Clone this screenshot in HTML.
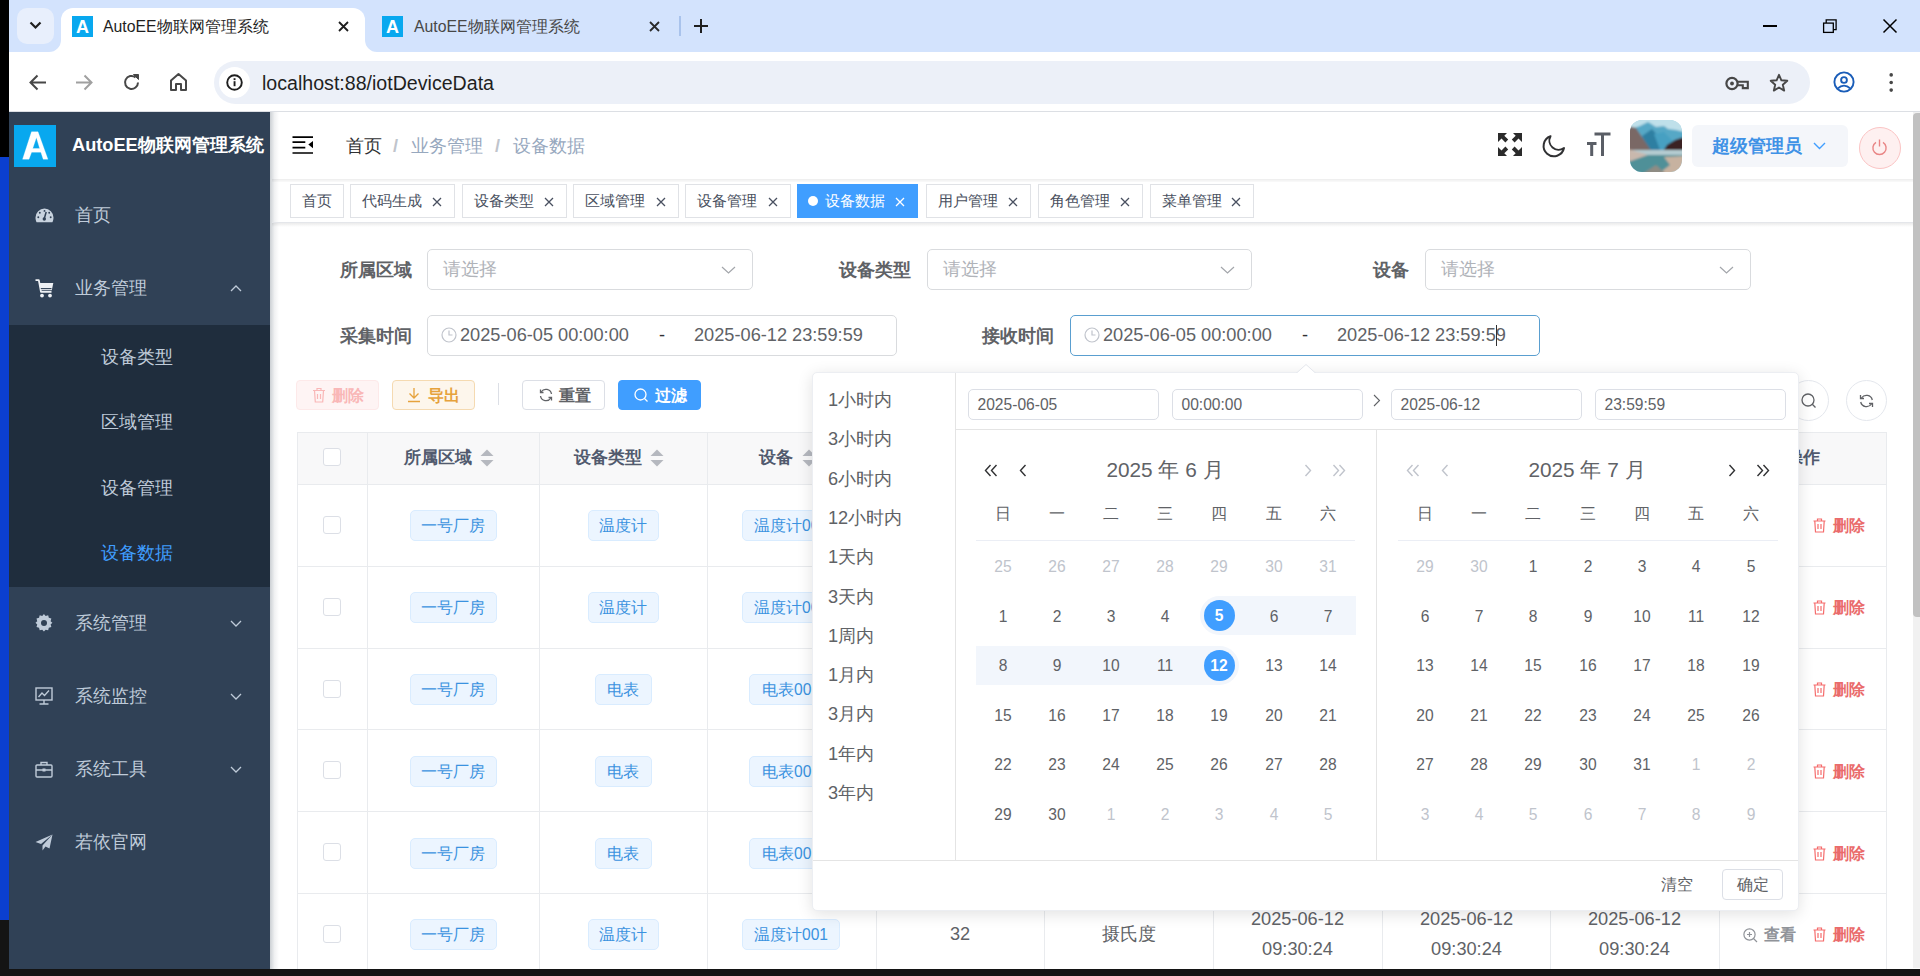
<!DOCTYPE html><html><head><meta charset="utf-8"><title>AutoEE</title><style>
*{box-sizing:border-box;margin:0;padding:0}
html,body{width:1920px;height:976px;overflow:hidden;background:#fff;font-family:"Liberation Sans",sans-serif}
body{position:relative}
.a{position:absolute}
svg{display:block;overflow:visible}
.nw{white-space:nowrap}
.tabtitle{font-size:15.8px;color:#1f1f1f;white-space:nowrap;line-height:20px}
.fav{width:21px;height:21px;background:#08a8ef;color:#fff;font-size:18px;font-weight:bold;line-height:22px;text-align:center}
.mi{color:#bfcbd9;font-size:18.2px;white-space:nowrap;line-height:22px}
.tag{height:34px;border:1px solid #d8dce5;background:#fff;color:#495060;font-size:15.6px;line-height:32px;padding:0 10px;white-space:nowrap}
.lbl{font-size:18.2px;font-weight:bold;color:#606266;white-space:nowrap;line-height:22px;text-align:right}
.inp{height:41px;border:1px solid #d9dbde;border-radius:5px;background:#fff}
.ph{color:#b0b3b9;font-size:18.2px;line-height:22px;white-space:nowrap}
.dt{color:#606266;font-size:18.2px;line-height:22px;white-space:nowrap}
.btn{height:30px;border-radius:4px;font-size:15.6px;line-height:28px;white-space:nowrap;border:1px solid}
.th{font-size:17px;font-weight:bold;color:#515a6e;white-space:nowrap;line-height:22px}
.td{font-size:18.2px;color:#606266;white-space:nowrap;line-height:30px;text-align:center}
.etag{height:31px;border:1px solid #d9ecff;background:#ecf5ff;color:#3a92e0;font-size:15.6px;line-height:29px;border-radius:5px;padding:0 12px;white-space:nowrap}
.vl{width:1px;background:#e9ebee}
.hl{height:1px;background:#e9ebee}
.sc{font-size:18.2px;color:#606266;white-space:nowrap;line-height:22px}
.pin{height:31px;border:1px solid #dcdfe6;border-radius:5px;background:#fff;font-size:15.6px;color:#606266;line-height:29px;padding:0 8.5px;white-space:nowrap}
.cday{width:54px;text-align:center;font-size:15.6px;color:#606266;line-height:20px;white-space:nowrap}
.cday.o{color:#c0c4cc}
.wk{width:54px;text-align:center;font-size:15.6px;color:#606266;line-height:20px}
</style></head><body>
<div class="a" style="left:0;top:0;width:9px;height:157px;background:#000"></div>
<div class="a" style="left:0;top:157px;width:9px;height:763px;background:#0b3fd0"></div>
<div class="a" style="left:0;top:920px;width:9px;height:56px;background:#141414"></div>
<div class="a" style="left:9px;top:0;width:1911px;height:52px;background:#d3e3fd"></div>
<div class="a" style="left:17px;top:8px;width:37px;height:36px;border-radius:10px;background:#e8effc"></div>
<svg class="a" style="left:29px;top:21px" width="13" height="9" viewBox="0 0 13 9"><path d="M1.5 1.5 L6.5 6.5 L11.5 1.5" stroke="#1f1f1f" stroke-width="2.2" fill="none"/></svg>
<div class="a" style="left:61px;top:8px;width:304px;height:44px;background:#fff;border-radius:12px 12px 0 0"></div>
<svg class="a" style="left:49px;top:40px" width="12" height="12" viewBox="0 0 12 12"><path d="M0 12 A12 12 0 0 0 12 0 V12Z" fill="#fff"/></svg>
<svg class="a" style="left:365px;top:40px" width="12" height="12" viewBox="0 0 12 12"><path d="M12 12 A12 12 0 0 1 0 0 V12Z" fill="#fff"/></svg>
<div class="a fav" style="left:72px;top:16px">A</div>
<div class="a tabtitle" style="left:103px;top:17px">AutoEE物联网管理系统</div>
<svg class="a" style="left:338px;top:21px" width="11" height="11" viewBox="0 0 11 11"><path d="M1 1L10 10M10 1L1 10" stroke="#1f1f1f" stroke-width="1.8"/></svg>
<div class="a fav" style="left:382px;top:16px">A</div>
<div class="a tabtitle" style="left:414px;top:17px;color:#474747">AutoEE物联网管理系统</div>
<svg class="a" style="left:649px;top:21px" width="11" height="11" viewBox="0 0 11 11"><path d="M1 1L10 10M10 1L1 10" stroke="#2a2a2a" stroke-width="1.8"/></svg>
<div class="a" style="left:679px;top:16px;width:1.5px;height:20px;background:#a9c3ec"></div>
<svg class="a" style="left:693px;top:18px" width="16" height="16" viewBox="0 0 16 16"><path d="M8 1V15M1 8H15" stroke="#1f1f1f" stroke-width="2"/></svg>
<div class="a" style="left:1763px;top:25px;width:14px;height:1.5px;background:#000"></div>
<svg class="a" style="left:1822px;top:18px" width="16" height="16" viewBox="0 0 16 16"><rect x="1.6" y="5.1" width="9.7" height="9.3" fill="none" stroke="#000" stroke-width="1.3"/><path d="M4.2 5V1.9H14.1V11.6H11.4" fill="none" stroke="#000" stroke-width="1.3"/></svg>
<svg class="a" style="left:1883px;top:19px" width="14" height="14" viewBox="0 0 14 14"><path d="M0.5 0.5L13.5 13.5M13.5 0.5L0.5 13.5" stroke="#000" stroke-width="1.5"/></svg>
<div class="a" style="left:9px;top:52px;width:1911px;height:60px;background:#fff;border-radius:10px 10px 0 0"></div>
<div class="a" style="left:9px;top:111px;width:1911px;height:1px;background:#dcdfe4"></div>
<svg class="a" style="left:29px;top:74px" width="18" height="17" viewBox="0 0 18 17"><path d="M17 8.5H2M8.5 1.5L1.5 8.5L8.5 15.5" stroke="#474747" stroke-width="2" fill="none"/></svg>
<svg class="a" style="left:75px;top:74px" width="18" height="17" viewBox="0 0 18 17"><path d="M1 8.5H16M9.5 1.5L16.5 8.5L9.5 15.5" stroke="#a0a0a0" stroke-width="2" fill="none"/></svg>
<svg class="a" style="left:122px;top:73px" width="19" height="19" viewBox="0 0 19 19"><path d="M16 9.5A6.5 6.5 0 1 1 13.6 4.4" stroke="#474747" stroke-width="2" fill="none"/><path d="M11.5 1.5H16.5V6.5Z" fill="#474747" stroke="#474747" stroke-width="1"/></svg>
<svg class="a" style="left:169px;top:72px" width="19" height="20" viewBox="0 0 19 20"><path d="M2 8.5L9.5 2L17 8.5V18H12V12H7V18H2Z" stroke="#474747" stroke-width="2" fill="none" stroke-linejoin="round"/></svg>
<div class="a" style="left:214px;top:61px;width:1596px;height:43px;border-radius:22px;background:#ecf0f8"></div>
<div class="a" style="left:219px;top:67px;width:31px;height:31px;border-radius:50%;background:#fff"></div>
<svg class="a" style="left:226px;top:74px" width="17" height="17" viewBox="0 0 17 17"><circle cx="8.5" cy="8.5" r="7.3" fill="none" stroke="#1f1f1f" stroke-width="1.9"/><rect x="7.6" y="7.2" width="1.9" height="5" fill="#1f1f1f"/><rect x="7.6" y="4.2" width="1.9" height="1.9" fill="#1f1f1f"/></svg>
<div class="a nw" style="left:262px;top:72px;font-size:19.6px;line-height:22px;color:#1f1f1f">localhost:88/iotDeviceData</div>
<svg class="a" style="left:1725px;top:76px" width="25" height="15" viewBox="0 0 25 15"><circle cx="7" cy="7.5" r="5.6" fill="none" stroke="#474747" stroke-width="2.2"/><circle cx="7" cy="7.5" r="1.9" fill="#474747"/><path d="M12.6 5.8H22.8V12.1H17.8V9.2H12.6" fill="none" stroke="#474747" stroke-width="2.1"/></svg>
<svg class="a" style="left:1769px;top:73px" width="20" height="20" viewBox="0 0 20 20"><path d="M10 1.8L12.4 7.3L18.3 7.8L13.8 11.7L15.2 17.6L10 14.5L4.8 17.6L6.2 11.7L1.7 7.8L7.6 7.3Z" fill="none" stroke="#474747" stroke-width="1.9" stroke-linejoin="round"/></svg>
<svg class="a" style="left:1833px;top:71px" width="22" height="22" viewBox="0 0 22 22"><circle cx="11" cy="11" r="9.6" fill="none" stroke="#1a5db8" stroke-width="1.9"/><circle cx="11" cy="9" r="2.9" fill="none" stroke="#1a5db8" stroke-width="1.9"/><path d="M4.9 17.4C6.9 15.3 9 14.6 11 14.6C13 14.6 15.1 15.3 17.1 17.4" fill="none" stroke="#1a5db8" stroke-width="1.9"/></svg>
<svg class="a" style="left:1888px;top:73px" width="6" height="19" viewBox="0 0 6 19"><circle cx="3.2" cy="1.9" r="1.8" fill="#474747"/><circle cx="3.2" cy="9.5" r="1.8" fill="#474747"/><circle cx="3.2" cy="17.1" r="1.8" fill="#474747"/></svg>
<div class="a" style="left:9px;top:112px;width:261px;height:864px;background:#304156"></div>
<div class="a" style="left:9px;top:325px;width:261px;height:262px;background:#1f2d3d"></div>
<div class="a" style="left:14px;top:125px;width:42px;height:42px;background:#08a8ef"></div>
<svg class="a" style="left:14px;top:125px" width="42" height="42" viewBox="0 0 42 42"><path d="M8.6 34.2L17.5 6.8H24L33.9 34.2H29.2L26.9 27.2H17.6L15 34.2ZM18.7 23.5H25.7L22.4 12.4Z" fill="#fff" fill-rule="evenodd" stroke="#fff" stroke-width="0.3" stroke-linejoin="round"/></svg>
<div class="a nw" style="left:72px;top:134px;font-size:18.2px;font-weight:bold;color:#fff;line-height:22px">AutoEE物联网管理系统</div>
<div class="a mi" style="left:75px;top:204px;color:#bfcbd9">首页</div>
<div class="a mi" style="left:75px;top:277px;color:#bfcbd9">业务管理</div>
<div class="a mi" style="left:101px;top:346px;color:#bfcbd9">设备类型</div>
<div class="a mi" style="left:101px;top:411px;color:#bfcbd9">区域管理</div>
<div class="a mi" style="left:101px;top:477px;color:#bfcbd9">设备管理</div>
<div class="a mi" style="left:101px;top:542px;color:#409eff">设备数据</div>
<div class="a mi" style="left:75px;top:612px;color:#bfcbd9">系统管理</div>
<div class="a mi" style="left:75px;top:685px;color:#bfcbd9">系统监控</div>
<div class="a mi" style="left:75px;top:758px;color:#bfcbd9">系统工具</div>
<div class="a mi" style="left:75px;top:831px;color:#bfcbd9">若依官网</div>
<svg class="a" style="left:230px;top:285px" width="12" height="7" viewBox="0 0 12 7"><path d="M1 6L6 1L11 6" stroke="#bfcbd9" stroke-width="1.3" fill="none"/></svg>
<svg class="a" style="left:230px;top:620px" width="12" height="7" viewBox="0 0 12 7"><path d="M1 1L6 6L11 1" stroke="#bfcbd9" stroke-width="1.3" fill="none"/></svg>
<svg class="a" style="left:230px;top:693px" width="12" height="7" viewBox="0 0 12 7"><path d="M1 1L6 6L11 1" stroke="#bfcbd9" stroke-width="1.3" fill="none"/></svg>
<svg class="a" style="left:230px;top:766px" width="12" height="7" viewBox="0 0 12 7"><path d="M1 1L6 6L11 1" stroke="#bfcbd9" stroke-width="1.3" fill="none"/></svg>
<svg class="a" style="left:35px;top:208px" width="19" height="15" viewBox="0 0 19 15"><path d="M9.5 0.5A9 9 0 0 0 0.5 9.5C0.5 11.3 0.9 13 1.6 14.3H17.4C18.1 13 18.5 11.3 18.5 9.5A9 9 0 0 0 9.5 0.5Z" fill="#c8d3df"/><path d="M9.3 10.5L11.2 4" stroke="#304156" stroke-width="1.5"/><circle cx="9.3" cy="11" r="1.7" fill="#304156"/><circle cx="3.3" cy="9.3" r="0.95" fill="#304156"/><circle cx="15.7" cy="9.3" r="0.95" fill="#304156"/><circle cx="4.8" cy="4.8" r="0.95" fill="#304156"/><circle cx="14.2" cy="4.8" r="0.95" fill="#304156"/><circle cx="9.5" cy="2.9" r="0.95" fill="#304156"/></svg>
<svg class="a" style="left:35px;top:279px" width="19" height="19" viewBox="0 0 19 19"><path d="M0.5 1.2H3.8L6 12.8H16.5" fill="none" stroke="#eef1f5" stroke-width="1.8" stroke-linejoin="round"/><path d="M4.4 4H18.3L16.8 11.2H5.6Z" fill="#eef1f5"/><path d="M5.8 9.6H16.5" stroke="#304156" stroke-width="1.1"/><circle cx="7" cy="16.6" r="1.9" fill="#eef1f5"/><circle cx="15" cy="16.6" r="1.9" fill="#eef1f5"/></svg>
<svg class="a" style="left:35px;top:614px" width="18" height="18" viewBox="0 0 18 18"><path d="M9 0.5L10.8 2.6L13.5 1.9L14.2 4.6L16.9 5.4L16.1 8.1L18 9.9L16.1 11.6L16.9 14.4L14.2 15.1L13.5 17.8L10.8 17.2L9 19.2L7.2 17.2L4.5 17.8L3.8 15.1L1.1 14.4L1.9 11.6L0 9.9L1.9 8.1L1.1 5.4L3.8 4.6L4.5 1.9L7.2 2.6Z" transform="scale(0.94) translate(0.5,-0.5)" fill="#bfcbd9"/><circle cx="9" cy="9" r="3" fill="#304156"/></svg>
<svg class="a" style="left:35px;top:687px" width="18" height="18" viewBox="0 0 18 18"><rect x="1" y="1" width="16" height="12" fill="none" stroke="#bfcbd9" stroke-width="1.4"/><path d="M3.5 10L7 6L9.5 8.5L14 3.5" fill="none" stroke="#bfcbd9" stroke-width="1.3"/><path d="M9 13V17M4.5 17H13.5" stroke="#bfcbd9" stroke-width="1.4"/></svg>
<svg class="a" style="left:35px;top:761px" width="18" height="17" viewBox="0 0 18 17"><rect x="1" y="4" width="16" height="12" rx="1" fill="none" stroke="#bfcbd9" stroke-width="1.4"/><path d="M6 4V1.5H12V4M1 9H17" stroke="#bfcbd9" stroke-width="1.4" fill="none"/><rect x="7.5" y="7.5" width="3" height="3" fill="#bfcbd9"/></svg>
<svg class="a" style="left:35px;top:834px" width="18" height="17" viewBox="0 0 18 17"><path d="M17.5 0.5L0.5 8L6 10L17.5 0.5L7.5 11.5V16.5L10.5 12.5L14.5 14.5Z" fill="#bfcbd9"/></svg>
<div class="a" style="left:270px;top:112px;width:9px;height:864px;background:linear-gradient(90deg,rgba(0,21,41,.2),rgba(0,21,41,.06) 50%,rgba(0,21,41,0))"></div>
<svg class="a" style="left:292px;top:136px" width="22" height="19" viewBox="0 0 22 19"><path d="M0.5 1.1H21M0.5 6.2H13.3M0.5 11.6H13.3M0.5 17H21" stroke="#000" stroke-width="1.7"/><path d="M21 5L21 12.2L16.3 8.6Z" fill="#000"/></svg>
<div class="a nw" style="left:346px;top:135px;font-size:18.2px;line-height:22px;color:#303133">首页</div>
<div class="a nw" style="left:393px;top:135px;font-size:18.2px;line-height:22px;color:#c0c4cc;font-weight:bold">/</div>
<div class="a nw" style="left:411px;top:135px;font-size:18.2px;line-height:22px;color:#97a8be">业务管理</div>
<div class="a nw" style="left:495px;top:135px;font-size:18.2px;line-height:22px;color:#c0c4cc;font-weight:bold">/</div>
<div class="a nw" style="left:513px;top:135px;font-size:18.2px;line-height:22px;color:#97a8be">设备数据</div>
<svg class="a" style="left:1498px;top:133px" width="24" height="23" viewBox="0 0 24 23"><path d="M0 0H9L6.3 2.7L10.2 6.6L7.4 9.4L3.5 5.5L0 9Z M24 0H15L17.7 2.7L13.8 6.6L16.6 9.4L20.5 5.5L24 9Z M0 23H9L6.3 20.3L10.2 16.4L7.4 13.6L3.5 17.5L0 14Z M24 23H15L17.7 20.3L13.8 16.4L16.6 13.6L20.5 17.5L24 14Z" fill="#2b2b2b"/></svg>
<svg class="a" style="left:1543px;top:135px" width="22" height="22" viewBox="0 0 22 22"><path d="M7.5 1.2A10.3 10.3 0 1 0 21 13A9.2 9.2 0 0 1 7.5 1.2Z" fill="none" stroke="#303133" stroke-width="2" stroke-linejoin="round"/></svg>
<svg class="a" style="left:1587px;top:133px" width="24" height="24" viewBox="0 0 24 24"><path d="M7.5 1H23.5M15.5 1V23M0 10.5H9.5M4.7 10.5V23" stroke="#5a5e66" stroke-width="3"/></svg>
<div class="a" style="left:1630px;top:120px;width:52px;height:52px;border-radius:12px;overflow:hidden;background:#9fd0e0"><svg width="52" height="52" viewBox="0 0 52 52"><defs><filter id="bl" x="-10%" y="-10%" width="120%" height="120%"><feGaussianBlur stdDeviation="0.9"/></filter></defs><g filter="url(#bl)"><rect x="-2" y="-2" width="56" height="56" fill="#bfe0ea"/><path d="M-2 10L10 6L18 2L26 7L34 6L38 9L46 10L54 12V34H-2Z" fill="#57a8c6"/><path d="M12 16L22 9L30 18L36 31H18Z" fill="#2f7fa2"/><path d="M24 14L34 12L42 20L38 30H30Z" fill="#46a0c2"/><path d="M-2 6L6 8L14 20L22 32H-2Z" fill="#7a6865"/><path d="M32 33L37 25L45 20L54 17V34Z" fill="#3b2020"/><path d="M-2 30H54V35H-2Z" fill="#b4cbd0"/><path d="M-2 35H54V54H-2Z" fill="#4f9098"/><path d="M-2 29L18 35L-2 42Z" fill="#c9b8ad"/><path d="M34 37L54 36V54H28L40 45Z" fill="#c7b2a0"/><path d="M12 54L26 45L36 54Z" fill="#8f8c84"/></g></svg></div>
<div class="a" style="left:1692px;top:125px;width:156px;height:42px;border-radius:6px;background:#f4f6fa"></div>
<div class="a nw" style="left:1712px;top:135px;font-size:18.2px;line-height:22px;color:#3f92e6;font-weight:bold">超级管理员</div>
<svg class="a" style="left:1813px;top:142px" width="13" height="8" viewBox="0 0 13 8"><path d="M1 1L6.5 6.5L12 1" stroke="#409eff" stroke-width="1.4" fill="none"/></svg>
<div class="a" style="left:1859px;top:127px;width:42px;height:42px;border-radius:50%;background:#fef0f0;border:1px solid #fbc4c4"></div>
<svg class="a" style="left:1871px;top:139px" width="17" height="17" viewBox="0 0 17 17"><path d="M5 3.3A6.6 6.6 0 1 0 12 3.3" stroke="#e98585" stroke-width="1.4" fill="none"/><path d="M8.5 0.5V7.5" stroke="#e98585" stroke-width="1.4"/></svg>
<div class="a" style="left:272px;top:179px;width:1641px;height:3px;background:linear-gradient(180deg,rgba(0,0,0,.07),rgba(0,0,0,.02))"></div>
<div class="a" style="left:272px;top:222px;width:1641px;height:1px;background:#e4e6ea"></div><div class="a" style="left:272px;top:223px;width:1641px;height:4px;background:linear-gradient(180deg,rgba(0,0,0,.08),rgba(0,0,0,0))"></div>
<div class="a" style="left:290px;top:184px;width:54px;height:34px;background:#fff;border:1px solid #e0e2e6"></div>
<div class="a nw" style="left:302px;top:190px;font-size:15.2px;line-height:22px;color:#495060">首页</div>
<div class="a" style="left:350px;top:184px;width:105px;height:34px;background:#fff;border:1px solid #e0e2e6"></div>
<div class="a nw" style="left:362px;top:190px;font-size:15.2px;line-height:22px;color:#495060">代码生成</div>
<svg class="a" style="left:432px;top:197px" width="10" height="10" viewBox="0 0 10 10"><path d="M1 1L9 9M9 1L1 9" stroke="#495060" stroke-width="1.3"/></svg>
<div class="a" style="left:462px;top:184px;width:105px;height:34px;background:#fff;border:1px solid #e0e2e6"></div>
<div class="a nw" style="left:474px;top:190px;font-size:15.2px;line-height:22px;color:#495060">设备类型</div>
<svg class="a" style="left:544px;top:197px" width="10" height="10" viewBox="0 0 10 10"><path d="M1 1L9 9M9 1L1 9" stroke="#495060" stroke-width="1.3"/></svg>
<div class="a" style="left:573px;top:184px;width:106px;height:34px;background:#fff;border:1px solid #e0e2e6"></div>
<div class="a nw" style="left:585px;top:190px;font-size:15.2px;line-height:22px;color:#495060">区域管理</div>
<svg class="a" style="left:656px;top:197px" width="10" height="10" viewBox="0 0 10 10"><path d="M1 1L9 9M9 1L1 9" stroke="#495060" stroke-width="1.3"/></svg>
<div class="a" style="left:685px;top:184px;width:106px;height:34px;background:#fff;border:1px solid #e0e2e6"></div>
<div class="a nw" style="left:697px;top:190px;font-size:15.2px;line-height:22px;color:#495060">设备管理</div>
<svg class="a" style="left:768px;top:197px" width="10" height="10" viewBox="0 0 10 10"><path d="M1 1L9 9M9 1L1 9" stroke="#495060" stroke-width="1.3"/></svg>
<div class="a" style="left:797px;top:184px;width:121px;height:34px;background:#409eff;border:1px solid #409eff"></div>
<div class="a" style="left:808px;top:196px;width:10px;height:10px;border-radius:50%;background:#fff"></div>
<div class="a nw" style="left:825px;top:190px;font-size:15.3px;line-height:22px;color:#fff">设备数据</div>
<svg class="a" style="left:895px;top:197px" width="10" height="10" viewBox="0 0 10 10"><path d="M1 1L9 9M9 1L1 9" stroke="#fff" stroke-width="1.3"/></svg>
<div class="a" style="left:926px;top:184px;width:105px;height:34px;background:#fff;border:1px solid #e0e2e6"></div>
<div class="a nw" style="left:938px;top:190px;font-size:15.2px;line-height:22px;color:#495060">用户管理</div>
<svg class="a" style="left:1008px;top:197px" width="10" height="10" viewBox="0 0 10 10"><path d="M1 1L9 9M9 1L1 9" stroke="#495060" stroke-width="1.3"/></svg>
<div class="a" style="left:1038px;top:184px;width:105px;height:34px;background:#fff;border:1px solid #e0e2e6"></div>
<div class="a nw" style="left:1050px;top:190px;font-size:15.2px;line-height:22px;color:#495060">角色管理</div>
<svg class="a" style="left:1120px;top:197px" width="10" height="10" viewBox="0 0 10 10"><path d="M1 1L9 9M9 1L1 9" stroke="#495060" stroke-width="1.3"/></svg>
<div class="a" style="left:1150px;top:184px;width:104px;height:34px;background:#fff;border:1px solid #e0e2e6"></div>
<div class="a nw" style="left:1162px;top:190px;font-size:15.2px;line-height:22px;color:#495060">菜单管理</div>
<svg class="a" style="left:1231px;top:197px" width="10" height="10" viewBox="0 0 10 10"><path d="M1 1L9 9M9 1L1 9" stroke="#495060" stroke-width="1.3"/></svg>
<div class="a" style="left:1913px;top:112px;width:7px;height:856px;background:#f1f1f1"></div>
<div class="a" style="left:1913px;top:113px;width:7px;height:504px;background:#c1c1c1;border-radius:4px 0 0 4px"></div>
<div class="a lbl" style="left:312px;width:100px;top:259px">所属区域</div>
<div class="a inp" style="left:427px;top:249px;width:326px"></div>
<div class="a ph" style="left:443px;top:258px">请选择</div>
<svg class="a" style="left:721px;top:266px" width="15" height="8" viewBox="0 0 15 8"><path d="M1 1L7.5 7L14 1" stroke="#a3a6ab" stroke-width="1.2" fill="none"/></svg>
<div class="a lbl" style="left:811px;width:100px;top:259px">设备类型</div>
<div class="a inp" style="left:927px;top:249px;width:325px"></div>
<div class="a ph" style="left:943px;top:258px">请选择</div>
<svg class="a" style="left:1220px;top:266px" width="15" height="8" viewBox="0 0 15 8"><path d="M1 1L7.5 7L14 1" stroke="#a3a6ab" stroke-width="1.2" fill="none"/></svg>
<div class="a lbl" style="left:1309px;width:100px;top:259px">设备</div>
<div class="a inp" style="left:1425px;top:249px;width:326px"></div>
<div class="a ph" style="left:1441px;top:258px">请选择</div>
<svg class="a" style="left:1719px;top:266px" width="15" height="8" viewBox="0 0 15 8"><path d="M1 1L7.5 7L14 1" stroke="#a3a6ab" stroke-width="1.2" fill="none"/></svg>
<div class="a lbl" style="left:312px;width:100px;top:325px">采集时间</div>
<div class="a inp" style="left:427px;top:315px;width:470px;height:41px;border-color:#d9dbde"></div>
<svg class="a" style="left:441px;top:327px" width="16" height="16" viewBox="0 0 16 16"><circle cx="8" cy="8" r="7" fill="none" stroke="#c0c4cc" stroke-width="1.2"/><path d="M8 3.5V8H11.5" fill="none" stroke="#c0c4cc" stroke-width="1.2"/></svg>
<div class="a dt" style="left:460px;top:324px">2025-06-05 00:00:00</div>
<div class="a dt" style="left:659px;top:324px;color:#303133">-</div>
<div class="a dt" style="left:694px;top:324px">2025-06-12 23:59:59</div>
<div class="a lbl" style="left:954px;width:100px;top:325px">接收时间</div>
<div class="a inp" style="left:1070px;top:315px;width:470px;height:41px;border-color:#5a9fd0"></div>
<svg class="a" style="left:1084px;top:327px" width="16" height="16" viewBox="0 0 16 16"><circle cx="8" cy="8" r="7" fill="none" stroke="#c0c4cc" stroke-width="1.2"/><path d="M8 3.5V8H11.5" fill="none" stroke="#c0c4cc" stroke-width="1.2"/></svg>
<div class="a dt" style="left:1103px;top:324px">2025-06-05 00:00:00</div>
<div class="a dt" style="left:1302px;top:324px;color:#303133">-</div>
<div class="a dt" style="left:1337px;top:324px">2025-06-12 23:59:59</div>
<div class="a" style="left:1496px;top:325px;width:1.3px;height:21px;background:#303133"></div>
<div class="a btn" style="left:296px;top:380px;width:83px;background:#fef4f4;border-color:#fde9e9;color:#f9b7b7"></div>
<svg class="a" style="left:312px;top:387px" width="14" height="16" viewBox="0 0 14 16"><path d="M1 3.5H13M5 3.5V1.5H9V3.5M2.5 3.5L3.3 15H10.7L11.5 3.5M5.5 7V12M8.5 7V12" stroke="#f9b7b7" stroke-width="1.2" fill="none"/></svg>
<div class="a nw" style="left:332px;top:386px;font-size:15.6px;line-height:20px;color:#f9b7b7;font-weight:bold">删除</div>
<div class="a btn" style="left:392px;top:380px;width:83px;background:#fdf6ec;border-color:#f5dab1;color:#e6a23c"></div>
<svg class="a" style="left:407px;top:387px" width="14" height="16" viewBox="0 0 14 16"><path d="M7 1V11M2.5 6.5L7 11L11.5 6.5M1 14.5H13" stroke="#e6a23c" stroke-width="1.3" fill="none"/></svg>
<div class="a nw" style="left:428px;top:386px;font-size:15.6px;line-height:20px;color:#e6a23c;font-weight:bold">导出</div>
<div class="a" style="left:498px;top:383px;width:1px;height:22px;background:#dcdfe6"></div>
<div class="a btn" style="left:522px;top:380px;width:83px;background:#fff;border-color:#dcdfe6"></div>
<svg class="a" style="left:539px;top:388px" width="14" height="14" viewBox="0 0 14 14"><path d="M12.5 6A5.6 5.6 0 0 0 2.2 4M1.5 8A5.6 5.6 0 0 0 11.8 10" stroke="#606266" stroke-width="1.3" fill="none"/><path d="M1.5 1.5V4.5H4.5M12.5 12.5V9.5H9.5" stroke="#606266" stroke-width="1.3" fill="none"/></svg>
<div class="a nw" style="left:559px;top:386px;font-size:15.6px;line-height:20px;color:#606266;font-weight:bold">重置</div>
<div class="a btn" style="left:618px;top:380px;width:83px;background:#409eff;border-color:#409eff"></div>
<svg class="a" style="left:634px;top:388px" width="15" height="15" viewBox="0 0 15 15"><circle cx="6.5" cy="6.5" r="5.5" stroke="#fff" stroke-width="1.3" fill="none"/><path d="M10.5 10.5L13.5 13.5" stroke="#fff" stroke-width="1.3"/></svg>
<div class="a nw" style="left:655px;top:386px;font-size:15.6px;line-height:20px;color:#fff;font-weight:bold">过滤</div>
<div class="a" style="left:1788px;top:380px;width:41px;height:41px;border-radius:50%;border:1px solid #e4e7ed;background:#fff"></div><svg class="a" style="left:1801px;top:393px" width="16" height="16" viewBox="0 0 16 16"><circle cx="7" cy="7" r="6" stroke="#606266" stroke-width="1.3" fill="none"/><path d="M11.3 11.3L14.5 14.5" stroke="#606266" stroke-width="1.3"/></svg>
<div class="a" style="left:1846px;top:380px;width:41px;height:41px;border-radius:50%;border:1px solid #e4e7ed;background:#fff"></div>
<svg class="a" style="left:1859px;top:394px" width="15" height="14" viewBox="0 0 15 14"><path d="M13.3 6A6 6 0 0 0 2.5 4M1.7 8A6 6 0 0 0 12.5 10" stroke="#606266" stroke-width="1.3" fill="none"/><path d="M1.5 1V4.5H5M13.5 13V9.5H10" stroke="#606266" stroke-width="1.3" fill="none"/></svg>
<div class="a" style="left:297px;top:432px;width:1589px;height:52px;background:#f8f8f9"></div>
<div class="a hl" style="left:297px;top:432px;width:1590px"></div>
<div class="a hl" style="left:297px;top:484.0px;width:1590px"></div>
<div class="a hl" style="left:297px;top:565.8px;width:1590px"></div>
<div class="a hl" style="left:297px;top:647.6px;width:1590px"></div>
<div class="a hl" style="left:297px;top:729.4px;width:1590px"></div>
<div class="a hl" style="left:297px;top:811.2px;width:1590px"></div>
<div class="a hl" style="left:297px;top:893.0px;width:1590px"></div>
<div class="a hl" style="left:297px;top:974.8px;width:1590px"></div>
<div class="a vl" style="left:297px;top:432px;height:540px"></div>
<div class="a vl" style="left:367px;top:432px;height:540px"></div>
<div class="a vl" style="left:539px;top:432px;height:540px"></div>
<div class="a vl" style="left:707px;top:432px;height:540px"></div>
<div class="a vl" style="left:876px;top:432px;height:540px"></div>
<div class="a vl" style="left:1044px;top:432px;height:540px"></div>
<div class="a vl" style="left:1213px;top:432px;height:540px"></div>
<div class="a vl" style="left:1382px;top:432px;height:540px"></div>
<div class="a vl" style="left:1550px;top:432px;height:540px"></div>
<div class="a vl" style="left:1719px;top:432px;height:540px"></div>
<div class="a vl" style="left:1886px;top:432px;height:540px"></div>
<div class="a th" style="left:403.5px;top:447px">所属区域</div>
<svg class="a" style="left:480.0px;top:449px" width="14" height="18" viewBox="0 0 14 18"><path d="M7 0.5L13.5 7H0.5Z" fill="#b5b8bf"/><path d="M7 17.5L13.5 11H0.5Z" fill="#b5b8bf"/></svg>
<div class="a th" style="left:573.5px;top:447px">设备类型</div>
<svg class="a" style="left:650.0px;top:449px" width="14" height="18" viewBox="0 0 14 18"><path d="M7 0.5L13.5 7H0.5Z" fill="#b5b8bf"/><path d="M7 17.5L13.5 11H0.5Z" fill="#b5b8bf"/></svg>
<div class="a th" style="left:759.0px;top:447px">设备</div>
<svg class="a" style="left:801.5px;top:449px" width="14" height="18" viewBox="0 0 14 18"><path d="M7 0.5L13.5 7H0.5Z" fill="#b5b8bf"/><path d="M7 17.5L13.5 11H0.5Z" fill="#b5b8bf"/></svg>
<div class="a th" style="left:927.5px;top:447px">数值</div>
<svg class="a" style="left:970.0px;top:449px" width="14" height="18" viewBox="0 0 14 18"><path d="M7 0.5L13.5 7H0.5Z" fill="#b5b8bf"/><path d="M7 17.5L13.5 11H0.5Z" fill="#b5b8bf"/></svg>
<div class="a th" style="left:1096.0px;top:447px">单位</div>
<svg class="a" style="left:1138.5px;top:449px" width="14" height="18" viewBox="0 0 14 18"><path d="M7 0.5L13.5 7H0.5Z" fill="#b5b8bf"/><path d="M7 17.5L13.5 11H0.5Z" fill="#b5b8bf"/></svg>
<div class="a th" style="left:1248.0px;top:447px">采集时间</div>
<svg class="a" style="left:1324.5px;top:449px" width="14" height="18" viewBox="0 0 14 18"><path d="M7 0.5L13.5 7H0.5Z" fill="#b5b8bf"/><path d="M7 17.5L13.5 11H0.5Z" fill="#b5b8bf"/></svg>
<div class="a th" style="left:1416.5px;top:447px">接收时间</div>
<svg class="a" style="left:1493.0px;top:449px" width="14" height="18" viewBox="0 0 14 18"><path d="M7 0.5L13.5 7H0.5Z" fill="#b5b8bf"/><path d="M7 17.5L13.5 11H0.5Z" fill="#b5b8bf"/></svg>
<div class="a th" style="left:1585.0px;top:447px">创建时间</div>
<svg class="a" style="left:1661.5px;top:449px" width="14" height="18" viewBox="0 0 14 18"><path d="M7 0.5L13.5 7H0.5Z" fill="#b5b8bf"/><path d="M7 17.5L13.5 11H0.5Z" fill="#b5b8bf"/></svg>
<div class="a th" style="left:1785.5px;top:447px">操作</div>
<div class="a" style="left:323px;top:448.0px;width:18px;height:18px;border:1px solid #dcdfe6;border-radius:3px;background:#fff"></div>
<div class="a" style="left:323px;top:515.9px;width:18px;height:18px;border:1px solid #dcdfe6;border-radius:3px;background:#fff"></div>
<div class="a" style="left:323px;top:597.7px;width:18px;height:18px;border:1px solid #dcdfe6;border-radius:3px;background:#fff"></div>
<div class="a" style="left:323px;top:679.5px;width:18px;height:18px;border:1px solid #dcdfe6;border-radius:3px;background:#fff"></div>
<div class="a" style="left:323px;top:761.3px;width:18px;height:18px;border:1px solid #dcdfe6;border-radius:3px;background:#fff"></div>
<div class="a" style="left:323px;top:843.1px;width:18px;height:18px;border:1px solid #dcdfe6;border-radius:3px;background:#fff"></div>
<div class="a" style="left:323px;top:924.9px;width:18px;height:18px;border:1px solid #dcdfe6;border-radius:3px;background:#fff"></div>
<div class="a etag" style="left:409.5px;top:510.4px;width:87px;text-align:center;padding:0">一号厂房</div>
<div class="a etag" style="left:587.5px;top:510.4px;width:71px;text-align:center;padding:0">温度计</div>
<div class="a etag" style="left:742.0px;top:510.4px;width:98px;text-align:center;padding:0">温度计001</div>
<div class="a td" style="left:876px;width:168px;top:509.9px">32</div>
<div class="a td" style="left:1044px;width:169px;top:509.9px">摄氏度</div>
<div class="a td" style="left:1213px;width:169px;top:494.9px">2025-06-12<br>09:30:24</div>
<div class="a td" style="left:1382px;width:169px;top:494.9px">2025-06-12<br>09:30:24</div>
<div class="a td" style="left:1550px;width:169px;top:494.9px">2025-06-12<br>09:30:24</div>
<svg class="a" style="left:1743px;top:519.4px" width="15" height="15" viewBox="0 0 15 15"><circle cx="6.5" cy="6.5" r="5.6" stroke="#909399" stroke-width="1.2" fill="none"/><path d="M10.5 10.5L14 14M6.5 4V9M4 6.5H9" stroke="#909399" stroke-width="1.2"/></svg>
<div class="a nw" style="left:1764px;top:516.4px;font-size:15.6px;line-height:20px;color:#909399;font-weight:bold">查看</div>
<svg class="a" style="left:1813px;top:518.4px" width="13" height="15" viewBox="0 0 13 15"><path d="M0.5 3H12.5M4.5 3V1H8.5V3M1.8 3L2.5 14H10.5L11.2 3M5 6V11M8 6V11" stroke="#f56c6c" stroke-width="1.2" fill="none"/></svg>
<div class="a nw" style="left:1833px;top:516.4px;font-size:15.6px;line-height:20px;color:#ea6b6b;font-weight:bold">删除</div>
<div class="a etag" style="left:409.5px;top:592.2px;width:87px;text-align:center;padding:0">一号厂房</div>
<div class="a etag" style="left:587.5px;top:592.2px;width:71px;text-align:center;padding:0">温度计</div>
<div class="a etag" style="left:742.0px;top:592.2px;width:98px;text-align:center;padding:0">温度计001</div>
<div class="a td" style="left:876px;width:168px;top:591.7px">32</div>
<div class="a td" style="left:1044px;width:169px;top:591.7px">摄氏度</div>
<div class="a td" style="left:1213px;width:169px;top:576.7px">2025-06-12<br>09:30:24</div>
<div class="a td" style="left:1382px;width:169px;top:576.7px">2025-06-12<br>09:30:24</div>
<div class="a td" style="left:1550px;width:169px;top:576.7px">2025-06-12<br>09:30:24</div>
<svg class="a" style="left:1743px;top:601.2px" width="15" height="15" viewBox="0 0 15 15"><circle cx="6.5" cy="6.5" r="5.6" stroke="#909399" stroke-width="1.2" fill="none"/><path d="M10.5 10.5L14 14M6.5 4V9M4 6.5H9" stroke="#909399" stroke-width="1.2"/></svg>
<div class="a nw" style="left:1764px;top:598.2px;font-size:15.6px;line-height:20px;color:#909399;font-weight:bold">查看</div>
<svg class="a" style="left:1813px;top:600.2px" width="13" height="15" viewBox="0 0 13 15"><path d="M0.5 3H12.5M4.5 3V1H8.5V3M1.8 3L2.5 14H10.5L11.2 3M5 6V11M8 6V11" stroke="#f56c6c" stroke-width="1.2" fill="none"/></svg>
<div class="a nw" style="left:1833px;top:598.2px;font-size:15.6px;line-height:20px;color:#ea6b6b;font-weight:bold">删除</div>
<div class="a etag" style="left:409.5px;top:674.0px;width:87px;text-align:center;padding:0">一号厂房</div>
<div class="a etag" style="left:594.5px;top:674.0px;width:57px;text-align:center;padding:0">电表</div>
<div class="a etag" style="left:749.0px;top:674.0px;width:84px;text-align:center;padding:0">电表001</div>
<div class="a td" style="left:876px;width:168px;top:673.5px">32</div>
<div class="a td" style="left:1044px;width:169px;top:673.5px">摄氏度</div>
<div class="a td" style="left:1213px;width:169px;top:658.5px">2025-06-12<br>09:30:24</div>
<div class="a td" style="left:1382px;width:169px;top:658.5px">2025-06-12<br>09:30:24</div>
<div class="a td" style="left:1550px;width:169px;top:658.5px">2025-06-12<br>09:30:24</div>
<svg class="a" style="left:1743px;top:683.0px" width="15" height="15" viewBox="0 0 15 15"><circle cx="6.5" cy="6.5" r="5.6" stroke="#909399" stroke-width="1.2" fill="none"/><path d="M10.5 10.5L14 14M6.5 4V9M4 6.5H9" stroke="#909399" stroke-width="1.2"/></svg>
<div class="a nw" style="left:1764px;top:680.0px;font-size:15.6px;line-height:20px;color:#909399;font-weight:bold">查看</div>
<svg class="a" style="left:1813px;top:682.0px" width="13" height="15" viewBox="0 0 13 15"><path d="M0.5 3H12.5M4.5 3V1H8.5V3M1.8 3L2.5 14H10.5L11.2 3M5 6V11M8 6V11" stroke="#f56c6c" stroke-width="1.2" fill="none"/></svg>
<div class="a nw" style="left:1833px;top:680.0px;font-size:15.6px;line-height:20px;color:#ea6b6b;font-weight:bold">删除</div>
<div class="a etag" style="left:409.5px;top:755.8px;width:87px;text-align:center;padding:0">一号厂房</div>
<div class="a etag" style="left:594.5px;top:755.8px;width:57px;text-align:center;padding:0">电表</div>
<div class="a etag" style="left:749.0px;top:755.8px;width:84px;text-align:center;padding:0">电表001</div>
<div class="a td" style="left:876px;width:168px;top:755.3px">32</div>
<div class="a td" style="left:1044px;width:169px;top:755.3px">摄氏度</div>
<div class="a td" style="left:1213px;width:169px;top:740.3px">2025-06-12<br>09:30:24</div>
<div class="a td" style="left:1382px;width:169px;top:740.3px">2025-06-12<br>09:30:24</div>
<div class="a td" style="left:1550px;width:169px;top:740.3px">2025-06-12<br>09:30:24</div>
<svg class="a" style="left:1743px;top:764.8px" width="15" height="15" viewBox="0 0 15 15"><circle cx="6.5" cy="6.5" r="5.6" stroke="#909399" stroke-width="1.2" fill="none"/><path d="M10.5 10.5L14 14M6.5 4V9M4 6.5H9" stroke="#909399" stroke-width="1.2"/></svg>
<div class="a nw" style="left:1764px;top:761.8px;font-size:15.6px;line-height:20px;color:#909399;font-weight:bold">查看</div>
<svg class="a" style="left:1813px;top:763.8px" width="13" height="15" viewBox="0 0 13 15"><path d="M0.5 3H12.5M4.5 3V1H8.5V3M1.8 3L2.5 14H10.5L11.2 3M5 6V11M8 6V11" stroke="#f56c6c" stroke-width="1.2" fill="none"/></svg>
<div class="a nw" style="left:1833px;top:761.8px;font-size:15.6px;line-height:20px;color:#ea6b6b;font-weight:bold">删除</div>
<div class="a etag" style="left:409.5px;top:837.6px;width:87px;text-align:center;padding:0">一号厂房</div>
<div class="a etag" style="left:594.5px;top:837.6px;width:57px;text-align:center;padding:0">电表</div>
<div class="a etag" style="left:749.0px;top:837.6px;width:84px;text-align:center;padding:0">电表001</div>
<div class="a td" style="left:876px;width:168px;top:837.1px">32</div>
<div class="a td" style="left:1044px;width:169px;top:837.1px">摄氏度</div>
<div class="a td" style="left:1213px;width:169px;top:822.1px">2025-06-12<br>09:30:24</div>
<div class="a td" style="left:1382px;width:169px;top:822.1px">2025-06-12<br>09:30:24</div>
<div class="a td" style="left:1550px;width:169px;top:822.1px">2025-06-12<br>09:30:24</div>
<svg class="a" style="left:1743px;top:846.6px" width="15" height="15" viewBox="0 0 15 15"><circle cx="6.5" cy="6.5" r="5.6" stroke="#909399" stroke-width="1.2" fill="none"/><path d="M10.5 10.5L14 14M6.5 4V9M4 6.5H9" stroke="#909399" stroke-width="1.2"/></svg>
<div class="a nw" style="left:1764px;top:843.6px;font-size:15.6px;line-height:20px;color:#909399;font-weight:bold">查看</div>
<svg class="a" style="left:1813px;top:845.6px" width="13" height="15" viewBox="0 0 13 15"><path d="M0.5 3H12.5M4.5 3V1H8.5V3M1.8 3L2.5 14H10.5L11.2 3M5 6V11M8 6V11" stroke="#f56c6c" stroke-width="1.2" fill="none"/></svg>
<div class="a nw" style="left:1833px;top:843.6px;font-size:15.6px;line-height:20px;color:#ea6b6b;font-weight:bold">删除</div>
<div class="a etag" style="left:409.5px;top:919.4px;width:87px;text-align:center;padding:0">一号厂房</div>
<div class="a etag" style="left:587.5px;top:919.4px;width:71px;text-align:center;padding:0">温度计</div>
<div class="a etag" style="left:742.0px;top:919.4px;width:98px;text-align:center;padding:0">温度计001</div>
<div class="a td" style="left:876px;width:168px;top:918.9px">32</div>
<div class="a td" style="left:1044px;width:169px;top:918.9px">摄氏度</div>
<div class="a td" style="left:1213px;width:169px;top:903.9px">2025-06-12<br>09:30:24</div>
<div class="a td" style="left:1382px;width:169px;top:903.9px">2025-06-12<br>09:30:24</div>
<div class="a td" style="left:1550px;width:169px;top:903.9px">2025-06-12<br>09:30:24</div>
<svg class="a" style="left:1743px;top:928.4px" width="15" height="15" viewBox="0 0 15 15"><circle cx="6.5" cy="6.5" r="5.6" stroke="#909399" stroke-width="1.2" fill="none"/><path d="M10.5 10.5L14 14M6.5 4V9M4 6.5H9" stroke="#909399" stroke-width="1.2"/></svg>
<div class="a nw" style="left:1764px;top:925.4px;font-size:15.6px;line-height:20px;color:#909399;font-weight:bold">查看</div>
<svg class="a" style="left:1813px;top:927.4px" width="13" height="15" viewBox="0 0 13 15"><path d="M0.5 3H12.5M4.5 3V1H8.5V3M1.8 3L2.5 14H10.5L11.2 3M5 6V11M8 6V11" stroke="#f56c6c" stroke-width="1.2" fill="none"/></svg>
<div class="a nw" style="left:1833px;top:925.4px;font-size:15.6px;line-height:20px;color:#ea6b6b;font-weight:bold">删除</div>
<div class="a" style="left:812px;top:372px;width:987px;height:539px;background:#fff;border:1px solid #eceef2;border-radius:5px;box-shadow:0 3px 16px 0 rgba(0,0,0,.12)"></div>
<svg class="a" style="left:1296px;top:364px" width="20" height="10" viewBox="0 0 20 10"><path d="M0 9.5L10 0.5L20 9.5" fill="#fff" stroke="#e4e7ed" stroke-width="1"/><rect x="0" y="9" width="20" height="2" fill="#fff"/></svg>
<div class="a vl" style="left:955px;top:373px;height:487px;background:#e4e4e4"></div>
<div class="a sc" style="left:828px;top:389.0px">1小时内</div>
<div class="a sc" style="left:828px;top:428.3px">3小时内</div>
<div class="a sc" style="left:828px;top:467.6px">6小时内</div>
<div class="a sc" style="left:828px;top:506.9px">12小时内</div>
<div class="a sc" style="left:828px;top:546.2px">1天内</div>
<div class="a sc" style="left:828px;top:585.5px">3天内</div>
<div class="a sc" style="left:828px;top:624.8px">1周内</div>
<div class="a sc" style="left:828px;top:664.1px">1月内</div>
<div class="a sc" style="left:828px;top:703.4px">3月内</div>
<div class="a sc" style="left:828px;top:742.7px">1年内</div>
<div class="a sc" style="left:828px;top:782.0px">3年内</div>
<div class="a pin" style="left:968px;top:389px;width:191px">2025-06-05</div>
<div class="a pin" style="left:1172px;top:389px;width:191px">00:00:00</div>
<svg class="a" style="left:1373px;top:394px" width="8" height="13" viewBox="0 0 8 13"><path d="M1 1L6.5 6.5L1 12" stroke="#606266" stroke-width="1.1" fill="none"/></svg>
<div class="a pin" style="left:1391px;top:389px;width:191px">2025-06-12</div>
<div class="a pin" style="left:1595px;top:389px;width:191px">23:59:59</div>
<div class="a hl" style="left:956px;top:429px;width:842px;background:#e4e4e4"></div>
<div class="a vl" style="left:1376px;top:430px;height:430px;background:#e4e4e4"></div>
<div class="a hl" style="left:813px;top:860px;width:985px;background:#e4e4e4"></div>
<div class="a nw" style="left:1661px;top:875px;font-size:15.6px;line-height:20px;color:#606266">清空</div>
<div class="a" style="left:1722px;top:869px;width:61px;height:31px;border:1px solid #dcdfe6;border-radius:4px;background:#fff"></div>
<div class="a nw" style="left:1737px;top:875px;font-size:15.6px;line-height:20px;color:#606266">确定</div>
<div class="a" style="left:1200px;top:596px;width:156px;height:39px;background:#f2f6fc;border-radius:19.5px 0 0 19.5px"></div>
<div class="a" style="left:976px;top:646px;width:263px;height:39px;background:#f2f6fc;border-radius:0 19.5px 19.5px 0"></div>
<div class="a" style="left:1204px;top:600px;width:31px;height:31px;border-radius:50%;background:#409eff"></div>
<div class="a" style="left:1204px;top:650px;width:31px;height:31px;border-radius:50%;background:#409eff"></div>
<div class="a nw" style="left:1085px;width:160px;text-align:center;top:458px;font-size:20.8px;line-height:24px;color:#606266">2025 年 6 月</div>
<svg class="a" style="left:984px;top:464px" width="14" height="13" viewBox="0 0 14 13"><path d="M6.5 1L1.5 6.5L6.5 12M12.5 1L7.5 6.5L12.5 12" stroke="#303133" stroke-width="1.4" fill="none"/></svg>
<svg class="a" style="left:1019px;top:464px" width="8" height="13" viewBox="0 0 8 13"><path d="M6.5 1L1.5 6.5L6.5 12" stroke="#303133" stroke-width="1.4" fill="none"/></svg>
<svg class="a" style="left:1304px;top:464px" width="8" height="13" viewBox="0 0 8 13"><path d="M1.5 1L6.5 6.5L1.5 12" stroke="#c0c4cc" stroke-width="1.4" fill="none"/></svg>
<svg class="a" style="left:1332px;top:464px" width="14" height="13" viewBox="0 0 14 13"><path d="M1.5 1L6.5 6.5L1.5 12M7.5 1L12.5 6.5L7.5 12" stroke="#c0c4cc" stroke-width="1.4" fill="none"/></svg>
<div class="a wk" style="left:976px;top:504px">日</div>
<div class="a wk" style="left:1030px;top:504px">一</div>
<div class="a wk" style="left:1084px;top:504px">二</div>
<div class="a wk" style="left:1138px;top:504px">三</div>
<div class="a wk" style="left:1192px;top:504px">四</div>
<div class="a wk" style="left:1247px;top:504px">五</div>
<div class="a wk" style="left:1301px;top:504px">六</div>
<div class="a hl" style="left:976px;top:540px;width:379px;background:#ebeef5"></div>
<div class="a cday o" style="left:976px;top:557.2px">25</div>
<div class="a cday o" style="left:1030px;top:557.2px">26</div>
<div class="a cday o" style="left:1084px;top:557.2px">27</div>
<div class="a cday o" style="left:1138px;top:557.2px">28</div>
<div class="a cday o" style="left:1192px;top:557.2px">29</div>
<div class="a cday o" style="left:1247px;top:557.2px">30</div>
<div class="a cday o" style="left:1301px;top:557.2px">31</div>
<div class="a cday" style="left:976px;top:606.7px">1</div>
<div class="a cday" style="left:1030px;top:606.7px">2</div>
<div class="a cday" style="left:1084px;top:606.7px">3</div>
<div class="a cday" style="left:1138px;top:606.7px">4</div>
<div class="a cday" style="left:1247px;top:606.7px">6</div>
<div class="a cday" style="left:1301px;top:606.7px">7</div>
<div class="a cday" style="left:976px;top:656.2px">8</div>
<div class="a cday" style="left:1030px;top:656.2px">9</div>
<div class="a cday" style="left:1084px;top:656.2px">10</div>
<div class="a cday" style="left:1138px;top:656.2px">11</div>
<div class="a cday" style="left:1247px;top:656.2px">13</div>
<div class="a cday" style="left:1301px;top:656.2px">14</div>
<div class="a cday" style="left:976px;top:705.7px">15</div>
<div class="a cday" style="left:1030px;top:705.7px">16</div>
<div class="a cday" style="left:1084px;top:705.7px">17</div>
<div class="a cday" style="left:1138px;top:705.7px">18</div>
<div class="a cday" style="left:1192px;top:705.7px">19</div>
<div class="a cday" style="left:1247px;top:705.7px">20</div>
<div class="a cday" style="left:1301px;top:705.7px">21</div>
<div class="a cday" style="left:976px;top:755.2px">22</div>
<div class="a cday" style="left:1030px;top:755.2px">23</div>
<div class="a cday" style="left:1084px;top:755.2px">24</div>
<div class="a cday" style="left:1138px;top:755.2px">25</div>
<div class="a cday" style="left:1192px;top:755.2px">26</div>
<div class="a cday" style="left:1247px;top:755.2px">27</div>
<div class="a cday" style="left:1301px;top:755.2px">28</div>
<div class="a cday" style="left:976px;top:804.7px">29</div>
<div class="a cday" style="left:1030px;top:804.7px">30</div>
<div class="a cday o" style="left:1084px;top:804.7px">1</div>
<div class="a cday o" style="left:1138px;top:804.7px">2</div>
<div class="a cday o" style="left:1192px;top:804.7px">3</div>
<div class="a cday o" style="left:1247px;top:804.7px">4</div>
<div class="a cday o" style="left:1301px;top:804.7px">5</div>
<div class="a nw" style="left:1507px;width:160px;text-align:center;top:458px;font-size:20.8px;line-height:24px;color:#606266">2025 年 7 月</div>
<svg class="a" style="left:1406px;top:464px" width="14" height="13" viewBox="0 0 14 13"><path d="M6.5 1L1.5 6.5L6.5 12M12.5 1L7.5 6.5L12.5 12" stroke="#c0c4cc" stroke-width="1.4" fill="none"/></svg>
<svg class="a" style="left:1441px;top:464px" width="8" height="13" viewBox="0 0 8 13"><path d="M6.5 1L1.5 6.5L6.5 12" stroke="#c0c4cc" stroke-width="1.4" fill="none"/></svg>
<svg class="a" style="left:1728px;top:464px" width="8" height="13" viewBox="0 0 8 13"><path d="M1.5 1L6.5 6.5L1.5 12" stroke="#303133" stroke-width="1.4" fill="none"/></svg>
<svg class="a" style="left:1756px;top:464px" width="14" height="13" viewBox="0 0 14 13"><path d="M1.5 1L6.5 6.5L1.5 12M7.5 1L12.5 6.5L7.5 12" stroke="#303133" stroke-width="1.4" fill="none"/></svg>
<div class="a wk" style="left:1398px;top:504px">日</div>
<div class="a wk" style="left:1452px;top:504px">一</div>
<div class="a wk" style="left:1506px;top:504px">二</div>
<div class="a wk" style="left:1561px;top:504px">三</div>
<div class="a wk" style="left:1615px;top:504px">四</div>
<div class="a wk" style="left:1669px;top:504px">五</div>
<div class="a wk" style="left:1724px;top:504px">六</div>
<div class="a hl" style="left:1398px;top:540px;width:380px;background:#ebeef5"></div>
<div class="a cday o" style="left:1398px;top:557.2px">29</div>
<div class="a cday o" style="left:1452px;top:557.2px">30</div>
<div class="a cday" style="left:1506px;top:557.2px">1</div>
<div class="a cday" style="left:1561px;top:557.2px">2</div>
<div class="a cday" style="left:1615px;top:557.2px">3</div>
<div class="a cday" style="left:1669px;top:557.2px">4</div>
<div class="a cday" style="left:1724px;top:557.2px">5</div>
<div class="a cday" style="left:1398px;top:606.7px">6</div>
<div class="a cday" style="left:1452px;top:606.7px">7</div>
<div class="a cday" style="left:1506px;top:606.7px">8</div>
<div class="a cday" style="left:1561px;top:606.7px">9</div>
<div class="a cday" style="left:1615px;top:606.7px">10</div>
<div class="a cday" style="left:1669px;top:606.7px">11</div>
<div class="a cday" style="left:1724px;top:606.7px">12</div>
<div class="a cday" style="left:1398px;top:656.2px">13</div>
<div class="a cday" style="left:1452px;top:656.2px">14</div>
<div class="a cday" style="left:1506px;top:656.2px">15</div>
<div class="a cday" style="left:1561px;top:656.2px">16</div>
<div class="a cday" style="left:1615px;top:656.2px">17</div>
<div class="a cday" style="left:1669px;top:656.2px">18</div>
<div class="a cday" style="left:1724px;top:656.2px">19</div>
<div class="a cday" style="left:1398px;top:705.7px">20</div>
<div class="a cday" style="left:1452px;top:705.7px">21</div>
<div class="a cday" style="left:1506px;top:705.7px">22</div>
<div class="a cday" style="left:1561px;top:705.7px">23</div>
<div class="a cday" style="left:1615px;top:705.7px">24</div>
<div class="a cday" style="left:1669px;top:705.7px">25</div>
<div class="a cday" style="left:1724px;top:705.7px">26</div>
<div class="a cday" style="left:1398px;top:755.2px">27</div>
<div class="a cday" style="left:1452px;top:755.2px">28</div>
<div class="a cday" style="left:1506px;top:755.2px">29</div>
<div class="a cday" style="left:1561px;top:755.2px">30</div>
<div class="a cday" style="left:1615px;top:755.2px">31</div>
<div class="a cday o" style="left:1669px;top:755.2px">1</div>
<div class="a cday o" style="left:1724px;top:755.2px">2</div>
<div class="a cday o" style="left:1398px;top:804.7px">3</div>
<div class="a cday o" style="left:1452px;top:804.7px">4</div>
<div class="a cday o" style="left:1506px;top:804.7px">5</div>
<div class="a cday o" style="left:1561px;top:804.7px">6</div>
<div class="a cday o" style="left:1615px;top:804.7px">7</div>
<div class="a cday o" style="left:1669px;top:804.7px">8</div>
<div class="a cday o" style="left:1724px;top:804.7px">9</div>
<div class="a cday" style="left:1192px;top:606px;color:#fff;font-weight:bold">5</div>
<div class="a cday" style="left:1192px;top:656px;color:#fff;font-weight:bold">12</div>
<div class="a" style="left:0;top:969px;width:1920px;height:7px;background:#141414"></div>
</body></html>
